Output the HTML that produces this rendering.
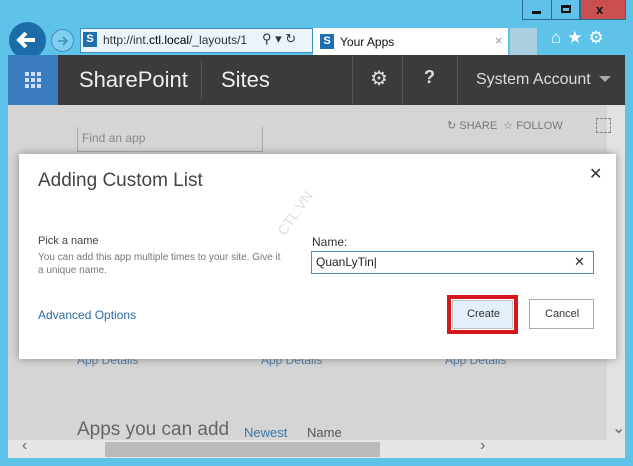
<!DOCTYPE html>
<html><head><meta charset="utf-8"><style>
*{margin:0;padding:0;box-sizing:border-box}
body{width:633px;height:466px;overflow:hidden;background:#5fc3e9;font-family:"Liberation Sans",sans-serif;position:relative}
.a{position:absolute}
.t{white-space:nowrap}
</style></head><body>
<div class="a" style="left:522px;top:0;width:30px;height:20px;border:1px solid #2a6c8a;border-top:none;background:#5fc3e9"></div>
<div class="a" style="left:532px;top:11px;width:9px;height:3px;background:#111"></div>
<div class="a" style="left:552px;top:0;width:28px;height:20px;border:1px solid #2a6c8a;border-top:none;border-left:none"></div>
<div class="a" style="left:561px;top:5px;width:10px;height:8px;border:2px solid #111;border-top-width:3px"></div>
<div class="a" style="left:580px;top:0;width:46px;height:20px;background:#c9504f;border:1px solid #2a6c8a;border-top:none"></div>
<div class="a t" style="left:596px;top:2px;font-size:13px;font-weight:bold;color:#111">x</div>
<div class="a" style="left:9px;top:22px;width:37px;height:37px;border-radius:50%;background:#1b6ca8"></div>
<svg class="a" style="left:15px;top:29px" width="24" height="22"><path d="M20 11H5M11 4L4 11l7 7" stroke="#fff" stroke-width="4" fill="none"/></svg>
<div class="a" style="left:51px;top:29px;width:23px;height:23px;border-radius:50%;border:1.5px solid #3c8fc0;background:#7fd0ef"></div>
<svg class="a" style="left:55px;top:33px" width="16" height="16"><path d="M3 8h9M8 4l4 4-4 4" stroke="#3c8fc0" stroke-width="1.6" fill="none"/></svg>
<div class="a" style="left:80px;top:28px;width:233px;height:25px;background:#eaf5fb;border:1px solid #3e8fc0"></div>
<div class="a" style="left:83px;top:32px;width:14px;height:15px;background:#1f6fb0;color:#fff;font-size:11px;font-weight:bold;text-align:center;line-height:15px">S</div>
<div class="a t" style="left:103px;top:33px;font-size:12px;color:#333">http://int.<b style="color:#000;font-weight:normal">ctl.local</b>/_layouts/1</div>
<div class="a t" style="left:262px;top:31px;font-size:13px;color:#333">⚲ ▾ ↻</div>
<div class="a" style="left:313px;top:28px;width:195px;height:27px;background:#fff"></div>
<div class="a" style="left:320px;top:34px;width:14px;height:15px;background:#1f6fb0;color:#fff;font-size:11px;font-weight:bold;text-align:center;line-height:15px">S</div>
<div class="a t" style="left:340px;top:35px;font-size:12px;color:#111">Your Apps</div>
<div class="a t" style="left:495px;top:33px;font-size:13px;color:#999">×</div>
<div class="a" style="left:510px;top:28px;width:27px;height:27px;background:#a9cfe0"></div>
<div class="a t" style="left:551px;top:28px;font-size:17px;color:#fff;letter-spacing:6px">⌂★⚙</div>
<div class="a" style="left:8px;top:55px;width:617px;height:50px;background:#3b3b3b"></div>
<div class="a" style="left:8px;top:55px;width:50px;height:50px;background:#3a7dbf"></div>
<svg class="a" style="left:25px;top:72px" width="16" height="16" fill="#cfe0f2"><rect x="0" y="0" width="4" height="4"/><rect x="6" y="0" width="4" height="4"/><rect x="12" y="0" width="4" height="4"/><rect x="0" y="6" width="4" height="4"/><rect x="6" y="6" width="4" height="4"/><rect x="12" y="6" width="4" height="4"/><rect x="0" y="12" width="4" height="4"/><rect x="6" y="12" width="4" height="4"/><rect x="12" y="12" width="4" height="4"/></svg>
<div class="a t" style="left:79px;top:67px;font-size:22px;color:#eee">SharePoint</div>
<div class="a" style="left:201px;top:60px;width:1px;height:40px;background:#555"></div>
<div class="a t" style="left:221px;top:67px;font-size:22px;color:#eee">Sites</div>
<div class="a" style="left:352px;top:55px;width:1px;height:50px;background:#555"></div>
<div class="a" style="left:402px;top:55px;width:1px;height:50px;background:#555"></div>
<div class="a" style="left:457px;top:55px;width:1px;height:50px;background:#555"></div>
<div class="a t" style="left:370px;top:66px;font-size:20px;color:#ddd">⚙</div>
<div class="a t" style="left:424px;top:67px;font-size:18px;font-weight:bold;color:#ddd">?</div>
<div class="a t" style="left:476px;top:71px;font-size:16px;color:#ddd">System Account</div>
<div class="a" style="left:599px;top:76px;width:0;height:0;border-left:6px solid transparent;border-right:6px solid transparent;border-top:6px solid #aaa"></div>
<div class="a" style="left:8px;top:105px;width:617px;height:335px;background:#d5d5d5"></div>
<div class="a" style="left:607px;top:105px;width:18px;height:335px;background:#e2e2e2"></div>
<div class="a" style="left:77px;top:127px;width:186px;height:25px;border:1px solid #aaa;border-top:none"></div>
<div class="a t" style="left:82px;top:131px;font-size:12px;color:#888">Find an app</div>
<div class="a t" style="left:447px;top:119px;font-size:11px;color:#777">↻ SHARE &nbsp;☆ FOLLOW</div>
<div class="a" style="left:596px;top:118px;width:15px;height:15px;border:1px dashed #888"></div>
<div class="a t" style="left:77px;top:353px;font-size:12px;color:#5a82a8">App Details</div>
<div class="a t" style="left:261px;top:353px;font-size:12px;color:#5a82a8">App Details</div>
<div class="a t" style="left:445px;top:353px;font-size:12px;color:#5a82a8">App Details</div>
<div class="a t" style="left:77px;top:419px;font-size:19px;color:#666">Apps you can add</div>
<div class="a t" style="left:244px;top:425px;font-size:13px;color:#3a76a8">Newest</div>
<div class="a t" style="left:307px;top:425px;font-size:13px;color:#555">Name</div>
<div class="a t" style="left:612px;top:418px;font-size:16px;color:#666">⌄</div>
<div class="a" style="left:8px;top:440px;width:617px;height:18px;background:#e6e6e6"></div>
<div class="a" style="left:105px;top:442px;width:275px;height:15px;background:#bababa"></div>
<div class="a t" style="left:22px;top:437px;font-size:16px;color:#666">‹</div>
<div class="a t" style="left:480px;top:437px;font-size:16px;color:#666">›</div>
<div class="a" style="left:19px;top:154px;width:597px;height:205px;background:#fff;box-shadow:0 0 8px rgba(0,0,0,.35)"></div>
<div class="a t" style="left:38px;top:170px;font-size:19px;color:#444">Adding Custom List</div>
<div class="a t" style="left:589px;top:164px;font-size:16px;color:#333">✕</div>
<div class="a t" style="left:38px;top:235px;font-size:11px;color:#444">Pick a name</div>
<div class="a" style="left:38px;top:251px;width:250px;font-size:10px;line-height:13px;color:#777">You can add this app multiple times to your site. Give it a unique name.</div>
<div class="a t" style="left:270px;top:205px;font-size:14px;color:#ddd;transform:rotate(-55deg)">CTL.VN</div>
<div class="a t" style="left:312px;top:235px;font-size:12px;color:#333">Name:</div>
<div class="a" style="left:311px;top:251px;width:283px;height:23px;border:1px solid #4c8ec4"></div>
<div class="a t" style="left:316px;top:255px;font-size:12px;color:#222">QuanLyTin|</div>
<div class="a t" style="left:574px;top:254px;font-size:13px;color:#333">✕</div>
<div class="a t" style="left:38px;top:308px;font-size:12px;color:#2a6ca4">Advanced Options</div>
<div class="a" style="left:447px;top:295px;width:71px;height:39px;border:4px solid #d4161e;background:#fff"></div>
<div class="a" style="left:452px;top:300px;width:61px;height:29px;background:#e3eff9;border:1px solid #c0c0c0"></div>
<div class="a t" style="left:467px;top:308px;font-size:11px;color:#333">Create</div>
<div class="a" style="left:529px;top:299px;width:65px;height:30px;border:1px solid #aaa"></div>
<div class="a t" style="left:545px;top:308px;font-size:11px;color:#333">Cancel</div>
</body></html>
